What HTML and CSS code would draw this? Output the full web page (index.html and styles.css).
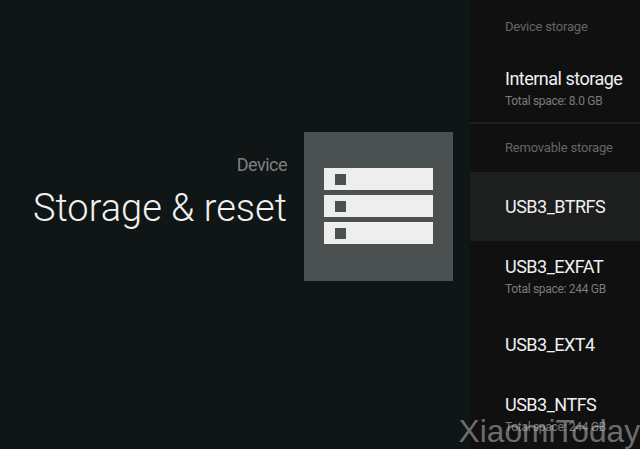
FILE: index.html
```html
<!DOCTYPE html>
<html lang="en">
  <head>
    <meta charset="UTF-8" />
    <meta name="viewport" content="width=device-width, initial-scale=1.0" />
    <title>Storage &amp; reset</title>
    <link rel="stylesheet" href="styles.css">
  </head>
  <body>
    <div class="screen">
      <div class="intro">
        <div class="titles">
          <div class="breadcrumb">Device</div>
          <h1>Storage &amp; reset</h1>
        </div>
        <div class="tile">
          <svg width="109" height="78" viewBox="0 0 109 78">
            <path fill="#eeeeee" fill-rule="evenodd" d="M0 0h109v22H0z M11 6v11h11V6z M0 27h109v22H0z M11 33v11h11V33z M0 54h109v22H0z M11 60v11h11V60z" />
          </svg>
        </div>
      </div>

      <div class="panel">
        <div class="section first">Device storage</div>
        <div class="row">
          <div class="name">Internal storage</div>
          <div class="sub">Total space: 8.0 GB</div>
        </div>
        <div class="divider"></div>
        <div class="section">Removable storage</div>
        <div class="row selected">
          <div class="name">USB3_BTRFS</div>
        </div>
        <div class="row">
          <div class="name">USB3_EXFAT</div>
          <div class="sub">Total space: 244 GB</div>
        </div>
        <div class="row">
          <div class="name">USB3_EXT4</div>
        </div>
        <div class="row">
          <div class="name">USB3_NTFS</div>
          <div class="sub">Total space: 244 GB</div>
        </div>
      </div>

      <div class="watermark">XiaomiToday</div>
    </div>
  </body>
</html>
```

FILE: styles.css
```css
body {
  margin: 0;
  background-color: #101516;
  font-family: Roboto, sans-serif;
}

.screen {
  position: relative;
  display: flex;
  width: 640px;
  height: 449px;
  overflow: hidden;
}

.intro {
  width: 470px;
  display: flex;
  justify-content: flex-end;
  align-items: center;
  gap: 17px;
  padding: 0 17px 36px 0;
  box-sizing: border-box;
}

.titles {
  text-align: right;
  padding-bottom: 30px;
}

.breadcrumb {
  font-size: 18px;
  line-height: 24px;
  letter-spacing: -0.5px;
  color: #7d8081;
}

h1 {
  margin: 8px 0 0;
  font-size: 38px;
  line-height: 46px;
  font-weight: 300;
  color: #f0f0f0;
}

.tile {
  width: 149px;
  height: 149px;
  background-color: #4b5150;
  display: flex;
  justify-content: center;
  align-items: center;
}

.panel {
  width: 170px;
  background-color: #101011;
}

.section {
  height: 48px;
  padding: 12px 0 0 35px;
  box-sizing: border-box;
  font-size: 13px;
  line-height: 24px;
  letter-spacing: -0.2px;
  color: #646666;
}

.section.first {
  height: 53px;
  padding-top: 15px;
}

.row {
  height: 69px;
  padding-left: 35px;
  display: flex;
  flex-direction: column;
  justify-content: center;
}

.row.selected {
  background-color: #1d1e1e;
}

.name {
  font-size: 18px;
  line-height: 24px;
  letter-spacing: -0.5px;
  color: #f0f0f0;
}

.sub {
  font-size: 12px;
  line-height: 20px;
  letter-spacing: -0.3px;
  margin-bottom: -3px;
  color: #7a7b7b;
}

.divider {
  height: 2px;
  background-color: #1e1f1f;
}

.watermark {
  position: absolute;
  right: 0;
  bottom: 0;
  font-family: "Liberation Sans", sans-serif;
  font-size: 31.7px;
  line-height: 36px;
  color: rgba(200, 200, 200, 0.5);
}
```
